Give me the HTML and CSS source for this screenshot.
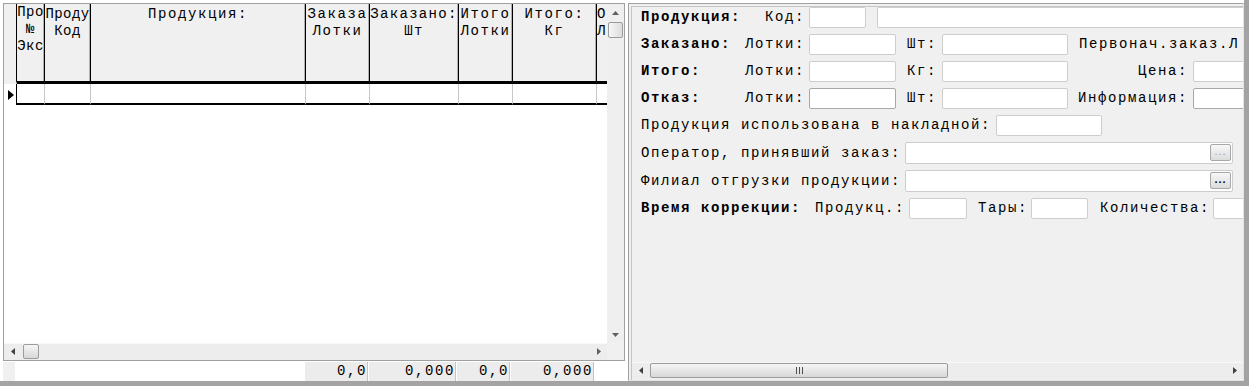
FILE: index.html
```html
<!DOCTYPE html>
<html lang="ru">
<head>
    <meta charset="UTF-8">
    <title>Заказ продукции</title>
    <link rel="stylesheet" href="styles.css">
</head>
<body>

<div class="form">

    <!-- Left side: order lines grid -->
    <div class="left-pane">
        <div class="grid">
            <div class="grid-body">
                <div class="grid-view">
                    <div class="grid-head">
                        <div class="hc w-ind ind"></div>
                        <div class="hc w1 tall tight"><div>Про</div><div>№</div><div>Экс</div></div>
                        <div class="hc w2 tight"><div>Проду</div><div>Код</div></div>
                        <div class="hc w3"><div>Продукция:</div></div>
                        <div class="hc w4"><div>Заказа</div><div>Лотки</div></div>
                        <div class="hc w5 snug"><div>Заказано:</div><div>Шт</div></div>
                        <div class="hc w6"><div>Итого</div><div>Лотки</div></div>
                        <div class="hc w7"><div>Итого:</div><div>Кг</div></div>
                        <div class="hc last"><div>О</div><div>Л</div></div>
                    </div>
                    <div class="grid-row">
                        <div class="dc w-ind ind">
                            <svg width="6" height="10" viewBox="0 0 6 10"><path d="M0 0 L6 5 L0 10 Z" fill="#000"/></svg>
                        </div>
                        <div class="dc w1"></div>
                        <div class="dc w2"></div>
                        <div class="dc w3"></div>
                        <div class="dc w4"></div>
                        <div class="dc w5"></div>
                        <div class="dc w6"></div>
                        <div class="dc w7"></div>
                        <div class="dc last"></div>
                    </div>
                </div>
                <div class="vscroll">
                    <div class="sb-btn"><svg width="7" height="4" viewBox="0 0 7 4"><path d="M0 4 L3.5 0 L7 4 Z" fill="#606060"/></svg></div>
                    <div class="vthumb"></div>
                    <div class="sb-fill"></div>
                    <div class="sb-btn"><svg width="7" height="4" viewBox="0 0 7 4"><path d="M0 0 L3.5 4 L7 0 Z" fill="#606060"/></svg></div>
                </div>
            </div>
            <div class="hscroll-row">
                <div class="hscroll">
                    <div class="sb-btn"><svg width="4" height="7" viewBox="0 0 4 7"><path d="M4 0 L0 3.5 L4 7 Z" fill="#404040"/></svg></div>
                    <div class="hthumb"></div>
                    <div class="sb-fill"></div>
                    <div class="sb-btn"><svg width="4" height="7" viewBox="0 0 4 7"><path d="M0 0 L4 3.5 L0 7 Z" fill="#606060"/></svg></div>
                </div>
                <div class="corner"></div>
            </div>
        </div>

        <!-- Totals under the grid -->
        <div class="totals">
            <div class="t-ind"></div>
            <div class="t-gap"></div>
            <div class="t-cell t4">0,0</div>
            <div class="t-cell t5">0,000</div>
            <div class="t-cell t6">0,0</div>
            <div class="t-cell t7">0,000</div>
        </div>
    </div>

    <!-- Right side: details of the selected line -->
    <div class="right-pane">
        <div class="fields">
            <div class="row">
                <b class="lbl" style="width:124px">Продукция:</b>
                <span class="lbl" style="width:44px">Код:</span>
                <span class="inp" style="width:57px"></span>
                <span class="inp gap" style="width:380px"></span>
            </div>
            <div class="row">
                <b class="lbl" style="width:104px">Заказано:</b>
                <span class="lbl" style="width:64px">Лотки:</span>
                <span class="inp" style="width:87px"></span>
                <span class="lbl gap" style="width:35px">Шт:</span>
                <span class="inp" style="width:126px"></span>
                <span class="lbl gap">Первонач.заказ.Л</span>
            </div>
            <div class="row">
                <b class="lbl" style="width:104px">Итого:</b>
                <span class="lbl" style="width:64px">Лотки:</span>
                <span class="inp" style="width:87px"></span>
                <span class="lbl gap" style="width:35px">Кг:</span>
                <span class="inp" style="width:126px"></span>
                <span class="lbl right" style="width:125px">Цена:</span>
                <span class="inp" style="width:70px"></span>
            </div>
            <div class="row">
                <b class="lbl" style="width:104px">Отказ:</b>
                <span class="lbl" style="width:64px">Лотки:</span>
                <span class="inp dark" style="width:87px"></span>
                <span class="lbl gap" style="width:35px">Шт:</span>
                <span class="inp" style="width:126px"></span>
                <span class="lbl right" style="width:125px">Информация:</span>
                <span class="inp dark" style="width:70px"></span>
            </div>
            <div class="row">
                <span class="lbl" style="width:355px">Продукция использована в накладной:</span>
                <span class="inp" style="width:106px"></span>
            </div>
            <div class="row tall">
                <span class="lbl" style="width:264px">Оператор, принявший заказ:</span>
                <span class="inp combo" style="width:328px"><span class="dots off">...</span></span>
            </div>
            <div class="row tall">
                <span class="lbl" style="width:264px">Филиал отгрузки продукции:</span>
                <span class="inp combo" style="width:328px"><span class="dots">...</span></span>
            </div>
            <div class="row">
                <b class="lbl" style="width:174px">Время коррекции:</b>
                <span class="lbl" style="width:94px">Продукц.:</span>
                <span class="inp" style="width:58px"></span>
                <span class="lbl gap" style="width:53px">Тары:</span>
                <span class="inp" style="width:57px"></span>
                <span class="lbl gap2" style="width:113px">Количества:</span>
                <span class="inp" style="width:70px"></span>
            </div>
        </div>
        <div class="hscroll wide">
            <div class="sb-btn"><svg width="4" height="7" viewBox="0 0 4 7"><path d="M4 0 L0 3.5 L4 7 Z" fill="#404040"/></svg></div>
            <div class="hthumb long">
                <svg width="7" height="7" viewBox="0 0 7 7"><path d="M0.5 0 V7 M3.5 0 V7 M6.5 0 V7" stroke="#505050" stroke-width="1"/></svg>
            </div>
            <div class="sb-fill"></div>
            <div class="sb-btn"><svg width="4" height="7" viewBox="0 0 4 7"><path d="M0 0 L4 3.5 L0 7 Z" fill="#404040"/></svg></div>
        </div>
    </div>

</div>

</body>
</html>
```

FILE: styles.css
```css
body {
    margin: 0;
    background-color: #fff;
    font-family: "Liberation Mono", "Courier New", monospace;
    font-size: 14px;
    letter-spacing: 1.6px;
    color: #000;
}

.form {
    width: 1249px;
    height: 386px;
    box-sizing: border-box;
    padding: 3px 0 0 3px;
    border-right: 5px solid #a3a3a3;
    border-bottom: 5px solid #a3a3a3;
    display: flex;
    gap: 3px;
}

/* ---------- left pane ---------- */
.left-pane {
    width: 622px;
    display: flex;
    flex-direction: column;
}

.grid {
    height: 358px;
    box-sizing: border-box;
    border: 1px solid #a0a0a0;
    display: flex;
    flex-direction: column;
}

.grid-body {
    flex: 1;
    display: flex;
    min-height: 0;
}

.grid-view {
    flex: 1;
    background-color: #fff;
    overflow: hidden;
}

.grid-head,
.grid-row {
    display: flex;
}

.hc {
    flex-shrink: 0;
    height: 80px;
    box-sizing: border-box;
    background-color: #f0f0f0;
    border-right: 1px solid #000;
    border-bottom: 3px solid #000;
    box-shadow: inset -1px 0 0 #b0b0b0;
    overflow: hidden;
    padding-top: 2px;
    line-height: 17px;
}

.hc div {
    white-space: nowrap;
    text-align: center;
}

.hc.ind {
    border-bottom-color: #f0f0f0;
    box-shadow: none;
}

.hc.tall {
    padding-top: 0;
}

.hc.tight {
    letter-spacing: 0.4px;
}

.hc.snug {
    letter-spacing: 1.3px;
}

.hc.last {
    flex: 1;
    border-right: 0;
    box-shadow: none;
}

.hc.last div {
    text-align: left;
    letter-spacing: 0;
}

.dc {
    flex-shrink: 0;
    height: 21px;
    box-sizing: border-box;
    border-right: 1px solid #c8c8c8;
    border-bottom: 2px solid #000;
}

.dc.ind {
    border-right-color: #000;
    border-bottom: 0;
    display: flex;
    align-items: center;
    padding-left: 4px;
}

.dc.last {
    flex: 1;
    border-right: 0;
}

.w-ind { width: 13px; }
.w1 { width: 28px; }
.w2 { width: 46px; }
.w3 { width: 215px; }
.w4 { width: 64px; }
.w5 { width: 89px; }
.w6 { width: 54px; }
.w7 { width: 84px; }

/* ---------- scroll bars ---------- */
.vscroll {
    width: 17px;
    flex-shrink: 0;
    background-color: #efefef;
    display: flex;
    flex-direction: column;
}

.sb-btn {
    width: 17px;
    height: 17px;
    flex-shrink: 0;
    display: flex;
    align-items: center;
    justify-content: center;
}

.sb-fill {
    flex: 1;
}

.vthumb {
    height: 16px;
    margin: 1px 1px 0 1px;
    box-sizing: border-box;
    border: 1px solid #9c9c9c;
    border-radius: 2px;
    background: linear-gradient(to right, #f6f6f6, #dcdcdc);
}

.hscroll-row {
    height: 17px;
    display: flex;
}

.hscroll {
    flex: 1;
    height: 17px;
    display: flex;
    align-items: center;
    background-color: #ededed;
    box-shadow: inset 0 1px 0 #f8f8f8;
}

.corner {
    width: 17px;
    background-color: #f0f0f0;
}

.hthumb {
    width: 16px;
    height: 15px;
    margin-left: 2px;
    box-sizing: border-box;
    border: 1px solid #9c9c9c;
    border-radius: 2px;
    background: linear-gradient(#f6f6f6, #d8d8d8);
    display: flex;
    align-items: center;
    justify-content: center;
}

.hthumb.long {
    width: 298px;
    margin-left: 1px;
}

/* ---------- totals ---------- */
.totals {
    height: 19px;
    margin-top: 1px;
    display: flex;
    line-height: 19px;
}

.t-ind {
    width: 12px;
    background-color: #f0f0f0;
}

.t-gap {
    width: 289px;
}

.t-cell {
    box-sizing: border-box;
    background-color: #ececec;
    border-left: 1px solid #fff;
    border-right: 1px solid #c4c4c4;
    text-align: right;
}

.t4 { width: 64px; }
.t5 { width: 88px; }
.t6 { width: 54px; }
.t7 { width: 84px; }

/* ---------- right pane ---------- */
.right-pane {
    width: 616px;
    box-sizing: border-box;
    border: 1px solid;
    border-color: #a0a0a0 #e3e3e3 #e3e3e3 #a0a0a0;
    background-color: #f0f0f0;
    box-shadow: inset 2px 2px 0 #f0f0f0, inset 3px 3px 0 #c4c4c4;
    display: flex;
    flex-direction: column;
    overflow: hidden;
}

.fields {
    flex: 1;
    padding: 3px 0 0 12px;
    overflow: hidden;
}

.row {
    display: flex;
    align-items: flex-start;
    height: 21px;
    margin-bottom: 6px;
    white-space: nowrap;
}

.row.tall {
    height: 22px;
}

.row > * {
    flex-shrink: 0;
}

.lbl {
    display: block;
    padding-top: 2px;
    line-height: 16px;
}

.tall .lbl {
    padding-top: 3px;
}

.lbl.right {
    text-align: right;
    padding-right: 5px;
    box-sizing: border-box;
}

.gap {
    margin-left: 11px;
}

.gap2 {
    margin-left: 12px;
}

.inp {
    display: block;
    height: 21px;
    box-sizing: border-box;
    background-color: #fff;
    border: 1px solid #cdcdcd;
    border-radius: 2px;
}

.inp.dark {
    border-color: #a8a8a8;
}

.inp.combo {
    height: 22px;
    display: flex;
    justify-content: flex-end;
    padding: 1px 1px 0 0;
}

.dots {
    width: 21px;
    height: 17px;
    box-sizing: border-box;
    border: 1px solid #a8a8a8;
    border-radius: 2px;
    background: linear-gradient(#f7f7f7, #dcdcdc);
    font-family: "Liberation Sans", sans-serif;
    font-size: 11px;
    font-weight: bold;
    letter-spacing: 1px;
    line-height: 13px;
    text-align: center;
    color: #000;
}

.dots.off {
    color: #a0a0a0;
    font-weight: normal;
}

.hscroll.wide {
    flex: none;
    margin: 0 0 1px 3px;
}
```
